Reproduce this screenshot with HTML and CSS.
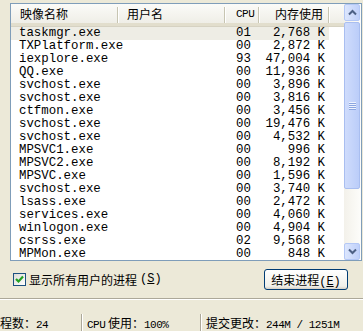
FILE: index.html
```html
<!DOCTYPE html>
<html>
<head>
    <title>Windows 任务管理器</title>
    <meta charset="utf-8">
    <link rel="stylesheet" href="styles.css">
</head>
<body>
<div class="window">
    <div class="processes">
        <div class="listbox">
            <div class="list">
                <div class="header">
                    <div class="hcell">映像名称</div>
                    <div class="hcell">用户名</div>
                    <div class="hcell mono">CPU</div>
                    <div class="hcell right">内存使用</div>
                    <div class="hcell last"></div>
                </div>
                <div class="row selected"><span>taskmgr.exe</span><span></span><span>01</span><span class="mem">2,768 K</span></div>
                <div class="row"><span>TXPlatform.exe</span><span></span><span>00</span><span class="mem">2,872 K</span></div>
                <div class="row"><span>iexplore.exe</span><span></span><span>93</span><span class="mem">47,004 K</span></div>
                <div class="row"><span>QQ.exe</span><span></span><span>00</span><span class="mem">11,936 K</span></div>
                <div class="row"><span>svchost.exe</span><span></span><span>00</span><span class="mem">3,896 K</span></div>
                <div class="row"><span>svchost.exe</span><span></span><span>00</span><span class="mem">3,816 K</span></div>
                <div class="row"><span>ctfmon.exe</span><span></span><span>00</span><span class="mem">3,456 K</span></div>
                <div class="row"><span>svchost.exe</span><span></span><span>00</span><span class="mem">19,476 K</span></div>
                <div class="row"><span>svchost.exe</span><span></span><span>00</span><span class="mem">4,532 K</span></div>
                <div class="row"><span>MPSVC1.exe</span><span></span><span>00</span><span class="mem">996 K</span></div>
                <div class="row"><span>MPSVC2.exe</span><span></span><span>00</span><span class="mem">8,192 K</span></div>
                <div class="row"><span>MPSVC.exe</span><span></span><span>00</span><span class="mem">1,596 K</span></div>
                <div class="row"><span>svchost.exe</span><span></span><span>00</span><span class="mem">3,740 K</span></div>
                <div class="row"><span>lsass.exe</span><span></span><span>00</span><span class="mem">2,472 K</span></div>
                <div class="row"><span>services.exe</span><span></span><span>00</span><span class="mem">4,060 K</span></div>
                <div class="row"><span>winlogon.exe</span><span></span><span>00</span><span class="mem">4,904 K</span></div>
                <div class="row"><span>csrss.exe</span><span></span><span>02</span><span class="mem">9,568 K</span></div>
                <div class="row"><span>MPMon.exe</span><span></span><span>00</span><span class="mem">848 K</span></div>
            </div>
            <div class="scrollbar">
                <div class="sb-btn">
                    <svg width="9" height="7" viewBox="0 0 9 7"><polyline points="1,5.5 4.5,2 8,5.5" fill="none" stroke="#4D6185" stroke-width="2"/></svg>
                </div>
                <div class="sb-thumb">
                    <div class="grip"></div>
                    <div class="grip"></div>
                    <div class="grip"></div>
                    <div class="grip"></div>
                </div>
                <div class="sb-track"></div>
                <div class="sb-btn">
                    <svg width="9" height="7" viewBox="0 0 9 7"><polyline points="1,1.5 4.5,5 8,1.5" fill="none" stroke="#4D6185" stroke-width="2"/></svg>
                </div>
            </div>
        </div>

        <div class="options">
            <label class="check">
                <span class="box">
                    <svg width="9" height="9" viewBox="0 0 9 9"><polyline points="1,4 3.5,6.5 8,1.5" fill="none" stroke="#21A121" stroke-width="2.2"/></svg>
                </span>
                显示所有用户的进程<span class="mono">(<u>S</u>)</span>
            </label>
            <button class="end-btn">结束进程<span class="mono">(<u>E</u>)</span></button>
        </div>
    </div>

    <div class="statusbar">
        <div class="panel first">程数：<span class="mono">24</span></div>
        <div class="panel second"><span class="mono">CPU</span> 使用：<span class="mono">100%</span></div>
        <div class="panel third">提交更改：<span class="mono">244M / 1251M</span></div>
    </div>
</div>
</body>
</html>
```

FILE: styles.css
```css
body {
    margin: 0;
    background: #ECE9D8;
    font-family: "Noto Sans CJK SC", sans-serif;
    font-size: 12px;
    color: #000;
}
.window {
    width: 363px;
    height: 331px;
    overflow: hidden;
}
.mono {
    font-family: "Liberation Mono", "Noto Sans CJK SC", monospace;
}
.processes {
    padding: 3px 0 0 10px;
    border-bottom: 1px solid #ACA899;
    box-shadow: 0 1px 0 #fff;
    height: 295px;
}

/* process list */
.listbox {
    display: flex;
    height: 256px;
    margin-right: 1px;
    border: 1px solid #7F9DB9;
    background: #fff;
}
.list {
    flex: 1;
    overflow: hidden;
}
.header {
    display: grid;
    grid-template-columns: 107px 107px 34px 70px 1fr;
    height: 19px;
    background: linear-gradient(#FBFBF8, #EFEEE7);
    border-bottom: 3px solid #E2DECD;
    box-shadow: 0 1px 0 #D6D2C2;
}
.hcell {
    padding-left: 9px;
    line-height: 20px;
    position: relative;
    white-space: nowrap;
}
.hcell::after {
    content: "";
    position: absolute;
    right: 0;
    top: 3px;
    bottom: 1px;
    width: 1px;
    background: #C7C5B2;
    box-shadow: 1px 0 0 #fff;
}
.hcell.mono {
    padding-left: 11px;
    font-size: 11px;
    letter-spacing: -0.5px;
}
.hcell.right {
    text-align: right;
    padding: 0 6px 0 0;
}
.hcell.last::after { display: none; }

.row {
    display: grid;
    grid-template-columns: 107px 107px 34px 70px;
    width: 318px;
    height: 13px;
    line-height: 13px;
    font-family: "Liberation Mono", monospace;
    font-size: 12.4px;
    white-space: pre;
}
.header + .row { margin-top: 1px; }
.row span:first-child { padding-left: 8px; }
.row span:nth-child(3) { padding-left: 11px; }
.row .mem {
    text-align: right;
    padding-right: 4px;
}
.row.selected { background: #EEEDE5; }

/* scrollbar */
.scrollbar {
    width: 17px;
    display: flex;
    flex-direction: column;
    background: linear-gradient(to right, #F3F1EA, #FDFDFA);
}
.sb-btn {
    height: 15px;
    margin: 0 1px 1px 0;
    border: 1px solid #B4C8F6;
    border-radius: 2px;
    background: linear-gradient(to right, #DCE6FD, #BFD0FA);
    display: flex;
    align-items: center;
    justify-content: center;
}
.sb-btn:last-child { margin: 1px 1px 0 0; }
.sb-thumb {
    height: 165px;
    margin-right: 1px;
    border: 1px solid #A9BEF0;
    border-radius: 2px;
    background: linear-gradient(to right, #CFDCFC, #BBCDF9);
    display: flex;
    flex-direction: column;
    justify-content: center;
    align-items: center;
    gap: 1px;
}
.grip {
    width: 7px;
    height: 1px;
    background: #EEF3FE;
    box-shadow: 0 1px 0 #8CA6E0;
}
.sb-track { flex: 1; }

/* checkbox + button row */
.options {
    display: flex;
    justify-content: space-between;
    align-items: center;
    height: 34px;
    padding: 1px 15px 0 3px;
}
.check {
    display: flex;
    align-items: center;
    gap: 3px;
    white-space: nowrap;
}
.box {
    width: 11px;
    height: 11px;
    border: 1px solid #1C5180;
    background: linear-gradient(135deg, #DCDCD7, #FFFFFF);
    display: flex;
    align-items: center;
    justify-content: center;
}
.end-btn {
    width: 84px;
    height: 21px;
    padding: 0;
    border: 1px solid #003C74;
    border-radius: 3px;
    background: linear-gradient(#FFFFFF, #F0F0EA 85%, #D6D0C5);
    font-family: "Noto Sans CJK SC", sans-serif;
    font-size: 12px;
    line-height: 19px;
}

/* status bar */
.statusbar {
    display: flex;
    margin-top: 15px;
    height: 17px;
    line-height: 17px;
    white-space: nowrap;
}
.panel {
    border-right: 1px solid #ACA899;
    box-shadow: 1px 0 0 #fff;
    padding-left: 5px;
}
.panel .mono { font-size: 11px; letter-spacing: -0.5px; }
.panel.first {
    width: 81px;
    padding-left: 0;
}
.panel.second { width: 113px; }
.panel.third { border: none; box-shadow: none; }
```
